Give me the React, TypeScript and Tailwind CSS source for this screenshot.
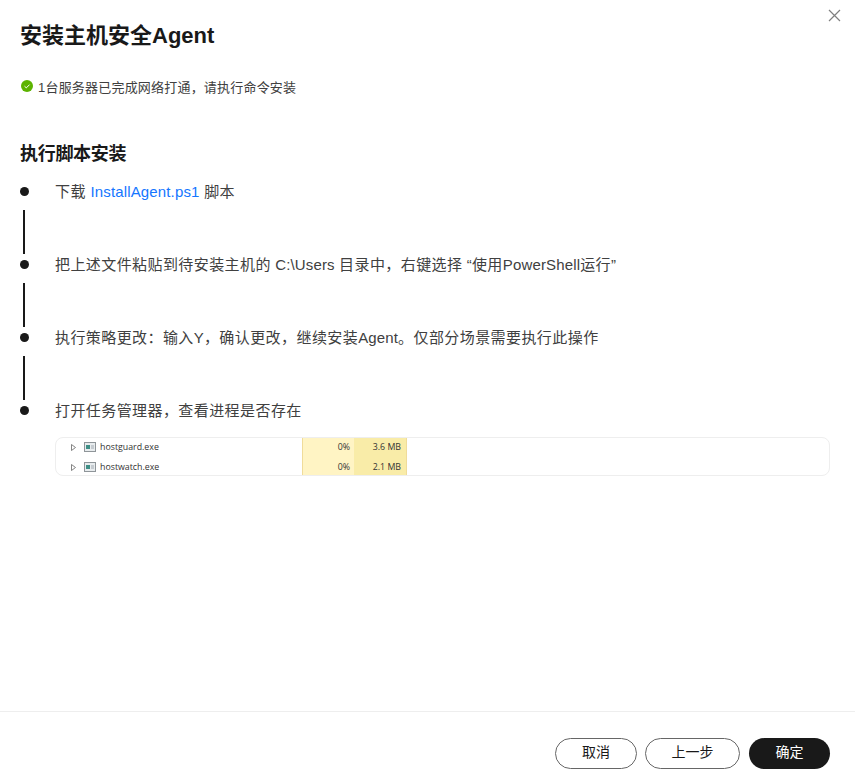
const cjk = "font-['Liberation_Sans','Noto_Sans_CJK_SC',sans-serif]";

function L({ children, className }: { children: React.ReactNode; className?: string }) {
  return <span className={`tracking-[0.15px] ${className ?? ""}`}>{children}</span>;
}

function Step({ children, last }: { children: React.ReactNode; last?: boolean }) {
  return (
    <div className={last ? "flex" : "flex h-[73px]"}>
      <div className="flex w-[35px] shrink-0 flex-col items-start">
        <div className="mt-[5px] h-[9px] w-[9px] rounded-full bg-[#191919]" />
        {!last && <div className="mt-[14px] ml-[3px] h-[44px] w-[2px] bg-[#191919]" />}
      </div>
      <div className="text-[15px] leading-[20px] tracking-[0.42px] text-[#404040]">{children}</div>
    </div>
  );
}

function Row({ name, cpu, mem }: { name: string; cpu: string; mem: string }) {
  return (
    <div className="flex h-[20px] text-[8.8px] text-[#333333] font-['Open_Sans',sans-serif]">
      <div className="flex w-[246px] items-center pl-[15px]">
        <svg width="5" height="7" viewBox="0 0 5 7" className="mr-[8px] -mt-[2px]">
          <path d="M0.5 0.5L4.5 3.5L0.5 6.5Z" fill="#ffffff" stroke="#666666" strokeWidth="0.8" />
        </svg>
        <svg width="12" height="10" viewBox="0 0 12 10" className="mr-[4px] -mt-[2px]">
          <rect x="0.5" y="0.5" width="11" height="9" fill="#e8ecee" stroke="#8f9599" />
          <rect x="2" y="3" width="4" height="4" fill="#3f8f86" />
          <rect x="7" y="3" width="3" height="4" fill="#c5cbd0" />
        </svg>
        <span>{name}</span>
      </div>
      <div className="flex w-[52px] items-center justify-end border-l border-[#f0dc9a] bg-[#fff4c4] pr-[4px]">{cpu}</div>
      <div className="flex w-[53px] items-center justify-end border-r border-[#f0dc9a] bg-[#f9eca8] pr-[5px]">{mem}</div>
    </div>
  );
}

export default function App() {
  return (
    <div className={`relative flex h-[783px] w-[855px] flex-col bg-white ${cjk}`}>
      <button className="absolute top-[9px] right-[14px] text-[#808080]" aria-label="关闭">
        <svg width="13" height="13" viewBox="0 0 13 13" fill="none" stroke="currentColor" strokeWidth="1.2">
          <path d="M1 1L12 12M12 1L1 12" />
        </svg>
      </button>
      <div className="flex-1 pl-[20px] pr-[25px] pt-[21px]">
        <h1 className="text-[22px] leading-[30px] font-bold text-[#191919]">安装主机安全Agent</h1>
        <div className="mt-[27px] flex">
          <svg width="12" height="12" viewBox="0 0 12 12" className="mt-[2px] ml-[1px] mr-[5px]">
            <circle cx="6" cy="6" r="6" fill="#5cb300" />
            <path d="M3.5 6.2L5.3 7.9L8.6 4.6" fill="none" stroke="#ffffff" strokeWidth="1" />
          </svg>
          <span className="text-[13px] leading-[20px] tracking-[0.2px] text-[#404040]">1台服务器已完成网络打通，请执行命令安装</span>
        </div>
        <h2 className="mt-[43px] text-[18px] leading-[26px] font-bold tracking-[-0.3px] text-[#191919]">执行脚本安装</h2>
        <div className="mt-[15px]">
          <Step>
            下载 <L className="text-[#1476ff]">InstallAgent.ps1</L> 脚本
          </Step>
          <Step>
            把上述文件粘贴到待安装主机的<L> C:\Users </L>目录中，右键选择<L> “</L>使用<L>PowerShell</L>运行<L>”</L>
          </Step>
          <Step>
            执行策略更改：输入<L>Y</L>，确认更改，继续安装<L>Agent</L>。仅部分场景需要执行此操作
          </Step>
          <Step last>打开任务管理器，查看进程是否存在</Step>
        </div>
        <div className="mt-[16px] ml-[35px] h-[39px] overflow-hidden rounded-lg border border-[#eeeeee]">
          <Row name="hostguard.exe" cpu="0%" mem="3.6 MB" />
          <Row name="hostwatch.exe" cpu="0%" mem="2.1 MB" />
        </div>
      </div>
      <div className="flex h-[72px] items-start justify-end gap-[8px] border-t border-[#eeeeee] pt-[26px] pr-[25px] text-[14px]">
        <button className="h-[31px] w-[82px] rounded-full border border-[#666666] pb-[2px] text-[#191919]">取消</button>
        <button className="h-[31px] w-[95px] rounded-full border border-[#666666] pb-[2px] text-[#191919]">上一步</button>
        <button className="ml-[1px] h-[31px] w-[81px] rounded-full bg-[#191919] pb-[2px] text-white">确定</button>
      </div>
    </div>
  );
}
